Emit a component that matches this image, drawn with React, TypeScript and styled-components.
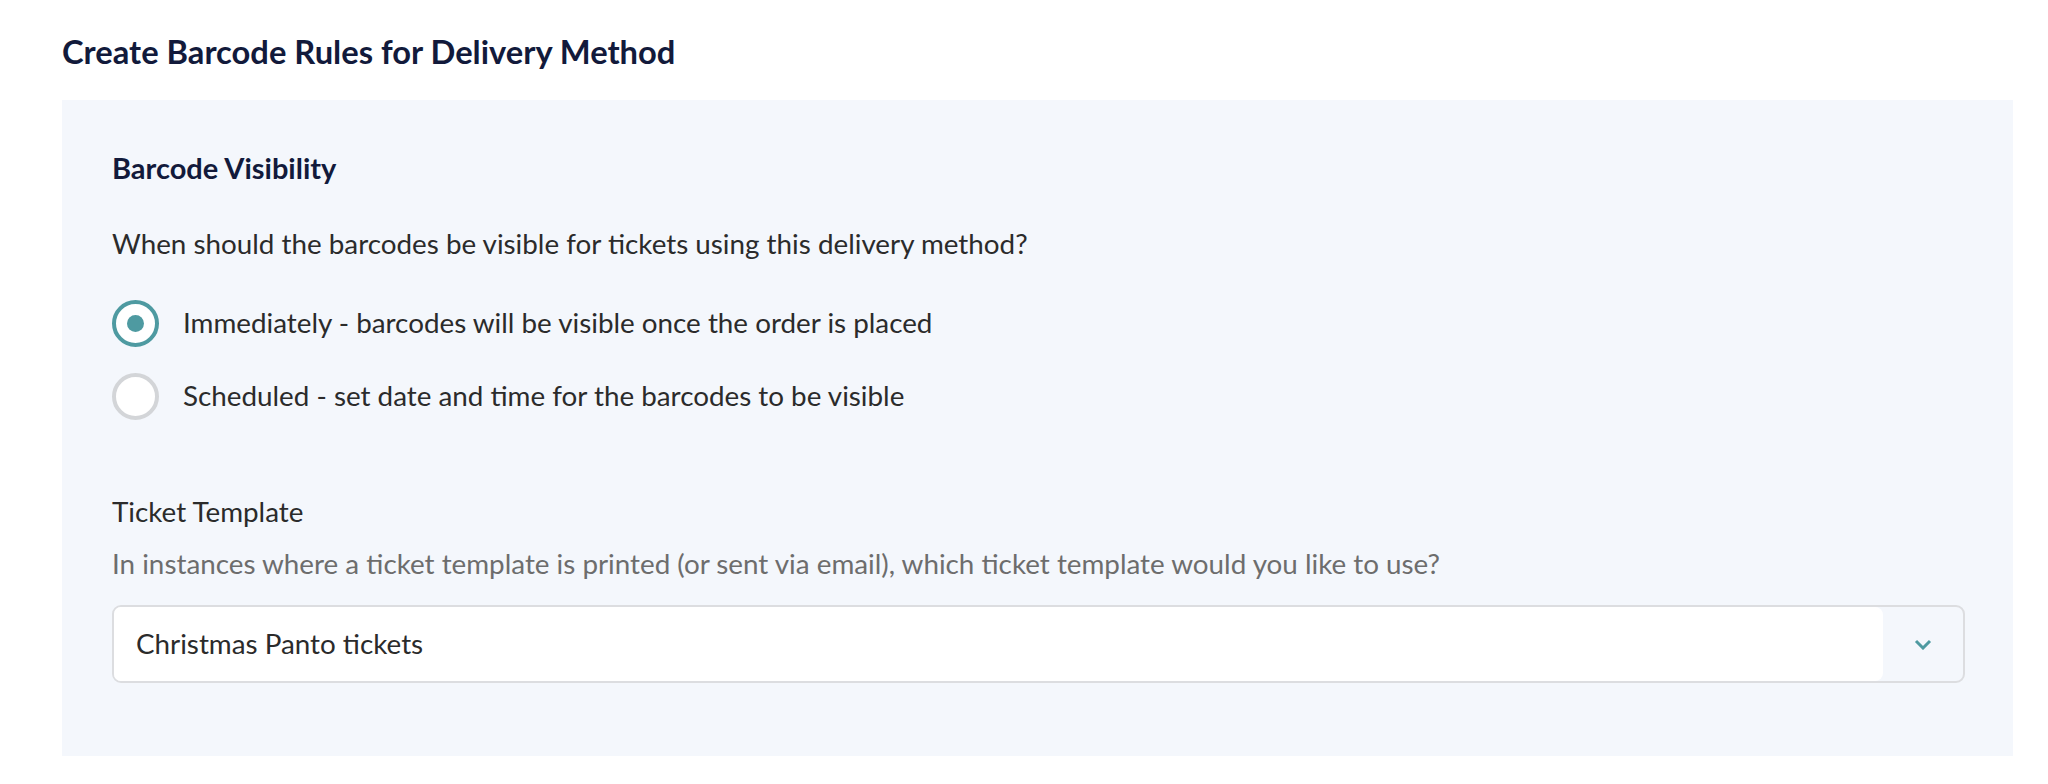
import React from "react";
import styled, { createGlobalStyle } from "styled-components";

const GlobalStyle = createGlobalStyle`
  html, body {
    margin: 0;
    padding: 0;
    background: #fff;
  }
  body {
    font-family: Lato, "Open Sans", sans-serif;
  }
`;

const Page = styled.div`
  padding: 33px 35px 0 62px;
`;

const Title = styled.h1`
  margin: 0 0 29px;
  font-size: 32.7px;
  line-height: 38px;
  font-weight: 700;
  color: #121a3b;
`;

const Panel = styled.section`
  background-color: #f4f7fc;
  padding: 49px 48px 73px 50px;
`;

const SectionTitle = styled.h2`
  margin: 0 0 38px;
  font-size: 29px;
  line-height: 38px;
  font-weight: 700;
  color: #121a3b;
`;

const Text = styled.p<{ $muted?: boolean }>`
  margin: 0;
  font-size: 27.8px;
  line-height: 38px;
  color: ${(p) => (p.$muted ? "#6d6d6d" : "#2b2b2b")};
`;

const RadioGroup = styled.div`
  display: flex;
  flex-direction: column;
  gap: 25px;
  margin: 36px 0 73px;
`;

const RadioRow = styled.label`
  display: flex;
  align-items: center;
  gap: 24px;
  height: 48px;
  cursor: pointer;
`;

const RadioCircle = styled.span<{ $checked?: boolean }>`
  box-sizing: border-box;
  width: 47px;
  height: 47px;
  border-radius: 50%;
  border: 4px solid ${(p) => (p.$checked ? "#4e9aa1" : "#d3d5d8")};
  background: #fff;
  display: flex;
  align-items: center;
  justify-content: center;
  flex-shrink: 0;

  &::after {
    content: "";
    display: ${(p) => (p.$checked ? "block" : "none")};
    width: 17px;
    height: 17px;
    border-radius: 50%;
    background: #4e9aa1;
  }
`;

const FieldLabel = styled(Text)`
  margin-bottom: 14px;
`;

const Select = styled.div`
  box-sizing: border-box;
  margin-top: 22px;
  height: 78px;
  display: flex;
  border: 2px solid #dcdde0;
  border-radius: 9px;
  background: #f4f7fc;
  overflow: hidden;
`;

const SelectValue = styled.div`
  flex: 1;
  display: flex;
  align-items: center;
  background: #fff;
  border-radius: 0 8px 8px 0;
  padding: 0 22px;
  font-size: 27.8px;
  line-height: 38px;
  color: #2b2b2b;
`;

const SelectButton = styled.div`
  width: 80px;
  display: flex;
  align-items: center;
  justify-content: center;
  color: #4e9aa1;
`;

const options = [
  { label: "Immediately - barcodes will be visible once the order is placed", checked: true },
  { label: "Scheduled - set date and time for the barcodes to be visible", checked: false },
];

export default function App() {
  return (
    <>
      <GlobalStyle />
      <Page>
        <Title>Create Barcode Rules for Delivery Method</Title>
        <Panel>
          <SectionTitle>Barcode Visibility</SectionTitle>
          <Text>When should the barcodes be visible for tickets using this delivery method?</Text>
          <RadioGroup>
            {options.map((o) => (
              <RadioRow key={o.label}>
                <RadioCircle $checked={o.checked} />
                <Text>{o.label}</Text>
              </RadioRow>
            ))}
          </RadioGroup>
          <FieldLabel>Ticket Template</FieldLabel>
          <Text $muted>
            In instances where a ticket template is printed (or sent via email), which ticket template would you like to use?
          </Text>
          <Select>
            <SelectValue>Christmas Panto tickets</SelectValue>
            <SelectButton>
              <svg width="18" height="11" viewBox="0 0 18 11" fill="none">
                <polyline points="2,2 9,9 16,2" stroke="currentColor" strokeWidth="3" />
              </svg>
            </SelectButton>
          </Select>
        </Panel>
      </Page>
    </>
  );
}
